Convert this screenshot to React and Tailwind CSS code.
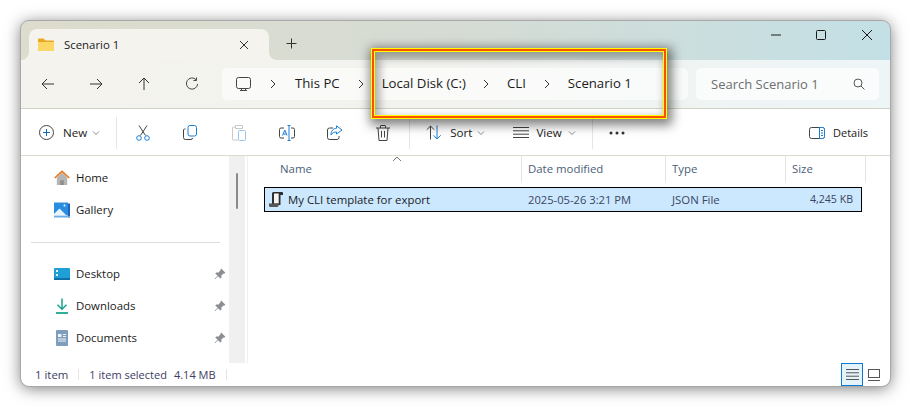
import React from 'react';

const Chev = ({ x = 'w-2 h-2' }) => (
  <svg className={x} viewBox="0 0 8 8" fill="none" stroke="#8a8a8a" strokeWidth="1"><path d="M1 2.5 4 5.5 7 2.5" /></svg>
);

const Crumb = () => (
  <svg className="w-2 h-[10px]" viewBox="0 0 8 10" fill="none" stroke="#333" strokeWidth="1"><path d="M2 1 6 5 2 9" /></svg>
);

const Divider = () => <div className="w-px h-[32px] bg-[#e5e5e5]" />;

const Pin = () => (
  <svg className="w-3 h-3 ml-auto mr-[3px]" viewBox="0 0 12 12" fill="#8b8f94">
    <path d="M7.2.6 11.4 4.8 10.5 5.6 9.6 5.4 7.4 7.6 7.4 9.8 6.4 10.6 4 8.2 1 11.2.6 10.8 3.6 7.8 1.3 5.5 2.2 4.5 4.4 4.5 6.6 2.3 6.4 1.4Z" />
  </svg>
);

const NavItem = ({ icon, label, pinned }) => (
  <div className="h-8 flex items-center pl-[33px] text-[#1a1a1a]">
    <div className="w-4 h-4 mr-[6px] shrink-0 flex items-center justify-center">{icon}</div>
    <span>{label}</span>
    {pinned && <Pin />}
  </div>
);

const HomeIcon = (
  <svg width="17" height="16" viewBox="0 0 17 16">
    <path d="M3 7.5 8.5 2.5 14 7.5V15.5H3Z" fill="#b5b5b5" />
    <path d="M6.5 15.5V10.5H10.5V15.5Z" fill="#8f8f8f" />
    <path d="M.8 8 8.5 1 16.2 8" fill="none" stroke="#e8761c" strokeWidth="1.7" />
  </svg>
);

const GalleryIcon = (
  <svg width="16" height="16" viewBox="0 0 16 16">
    <rect x="0" y="0.5" width="14" height="13" fill="#2a8ee0" />
    <rect x="14" y="1.5" width="2" height="14" fill="#1b66b8" />
    <rect x="0" y="14" width="16" height="1.5" fill="#6aaee8" />
    <path d="M0 12 5.5 6.5 11 12 12.5 13.5H0Z" fill="#e8f3fc" />
    <circle cx="10.5" cy="3.5" r="1" fill="#fff" />
  </svg>
);

const DesktopIcon = (
  <svg width="16" height="12" viewBox="0 0 16 12">
    <rect width="16" height="12" rx="1" fill="#1e9fd6" />
    <rect y="10" width="16" height="2" fill="#0f6fa8" />
    <rect x="2" y="2" width="2" height="2" fill="#dff4fb" />
    <rect x="2" y="6" width="2" height="2" fill="#dff4fb" />
  </svg>
);

const DownloadIcon = (
  <svg width="14" height="16" viewBox="0 0 14 16" fill="none" stroke="#19a58c" strokeWidth="1.5">
    <path d="M7 0.5V11M2.5 6.8 7 11.2 11.5 6.8" />
    <path d="M1 15H13" strokeWidth="1.8" />
  </svg>
);

const DocsIcon = (
  <svg width="12" height="16" viewBox="0 0 12 16">
    <rect width="12" height="16" rx="1" fill="#7f9dbd" />
    <rect x="2" y="4" width="3.5" height="3" fill="#eef3f8" />
    <path d="M7 4.5h3M7 6.5h3M2 9h8M2 11h8" stroke="#eef3f8" strokeWidth="1" />
  </svg>
);

const Column = ({ label, className }) => (
  <div className={`h-[26px] flex items-center border-r border-[#e5e5e5] text-[#4c607a] ${className}`}>{label}</div>
);

export default function App() {
  return (
    <div className="relative w-[911px] h-[407px] bg-white p-[21px] overflow-hidden text-[11.4px] leading-none" style={{ fontFamily: '"Open Sans", "Noto Sans", sans-serif' }}>
      <div className="w-[869px] h-[365px] flex flex-col rounded-lg overflow-hidden bg-white shadow-[0_2px_16px_rgba(0,0,0,0.55)] outline outline-[#a8a8a8]">
        {/* Title bar */}
        <div className="h-[39px] shrink-0 flex items-end pl-2 bg-linear-to-r from-[#dddccd] via-[#d6dcd4] to-[#c3e0e6]">
          <div className="relative w-[240px] h-[31px] rounded-t-lg bg-[#f4f3ee] flex items-center pl-[9px] pr-[20px]">
            {/* flared tab corners */}
            <div className="absolute -left-2 bottom-0 w-2 h-2 bg-[#f4f3ee]"><div className="w-2 h-2 rounded-br-lg bg-[#dddccd]" /></div>
            <div className="absolute -right-2 bottom-0 w-2 h-2 bg-[#f4f3ee]"><div className="w-2 h-2 rounded-bl-lg bg-[#dbdccf]" /></div>
            <svg width="16" height="13" viewBox="0 0 16 13">
              <path d="M0 1.5A1 1 0 0 1 1 .5H5.5L7.5 2.5H15A1 1 0 0 1 16 3.5V12A1 1 0 0 1 15 13H1A1 1 0 0 1 0 12Z" fill="#e9a820" />
              <path d="M0 4H16V12A1 1 0 0 1 15 13H1A1 1 0 0 1 0 12Z" fill="#fcd766" />
            </svg>
            <span className="ml-[10px] text-[#1a1a1a]">Scenario 1</span>
            <svg className="ml-auto" width="10" height="10" viewBox="0 0 10 10" stroke="#333" strokeWidth="1"><path d="M1 1 9 9M9 1 1 9" /></svg>
          </div>
          <div className="ml-[17px] mb-[11px]">
            <svg width="11" height="11" viewBox="0 0 11 11" stroke="#333" strokeWidth="1"><path d="M5.5 0.5V10.5M0.5 5.5H10.5" /></svg>
          </div>
          <div className="ml-auto self-start h-[28px] flex items-center">
            <svg width="10" height="10" viewBox="0 0 10 10" stroke="#1a1a1a" strokeWidth="1"><path d="M0 5H10" /></svg>
            <svg className="ml-[35px]" width="10" height="10" viewBox="0 0 10 10" fill="none" stroke="#1a1a1a" strokeWidth="1"><rect x="0.5" y="0.5" width="9" height="9" rx="1" /></svg>
            <svg className="ml-[36px] mr-[18px]" width="10" height="10" viewBox="0 0 10 10" stroke="#1a1a1a" strokeWidth="1"><path d="M0 0 10 10M10 0 0 10" /></svg>
          </div>
        </div>

        {/* Address row */}
        <div className="h-[49px] shrink-0 flex items-center pl-[20px] pr-[11px] border-b border-[#cfd3c6] bg-linear-to-r from-[#f4f3ee] via-[#f2f3ef] to-[#edf5f7]">
          <svg width="14" height="12" viewBox="0 0 14 12" fill="none" stroke="#333" strokeWidth="1"><path d="M13 6H1M6 1 1 6 6 11" /></svg>
          <svg className="ml-[34px]" width="14" height="12" viewBox="0 0 14 12" fill="none" stroke="#333" strokeWidth="1"><path d="M1 6H13M8 1 13 6 8 11" /></svg>
          <svg className="ml-[35px]" width="12" height="14" viewBox="0 0 12 14" fill="none" stroke="#333" strokeWidth="1"><path d="M6 13V1M1 6 6 1 11 6" /></svg>
          <svg className="ml-[35px]" width="14" height="14" viewBox="0 0 14 14" fill="none" stroke="#444" strokeWidth="1"><path d="M11 2.6A5.6 5.6 0 1 0 12.6 7" /><path d="M11.5 .5V3.5H8.5" /></svg>
          <div className="ml-[23px] w-[466px] h-8 rounded-[5px] bg-white/60 flex items-center pl-[14px] text-[13.2px] text-[#1a1a1a]">
            <svg width="15" height="15" viewBox="0 0 15 15" fill="none" stroke="#444" strokeWidth="1"><rect x="0.5" y="0.5" width="14" height="11" rx="2" /><path d="M4 13.5H11M5.5 12V13.5M9.5 12V13.5" /></svg>
            <span className="ml-[18px]"><Crumb /></span>
            <span className="ml-[18px]">This PC</span>
            <span className="ml-[17px]"><Crumb /></span>
            <span className="ml-[17px]">Local Disk (C:)</span>
            <span className="ml-[16px]"><Crumb /></span>
            <span className="ml-[17px]">CLI</span>
            <span className="ml-[17px]"><Crumb /></span>
            <span className="ml-[17px]">Scenario 1</span>
          </div>
          <div className="ml-2 flex-1 h-8 rounded-[5px] bg-white/70 flex items-center pl-[15px] pr-[14px] text-[13px] text-[#6e6e6e]">
            <span>Search Scenario 1</span>
            <svg className="ml-auto" width="12" height="12" viewBox="0 0 12 12" fill="none" stroke="#555" strokeWidth="1"><circle cx="5" cy="5" r="4" /><path d="M8 8 11.5 11.5" /></svg>
          </div>
        </div>

        {/* Toolbar */}
        <div className="h-[47px] shrink-0 flex items-center pl-[18px] pr-[22px] pt-[1px] bg-white border-b border-[#dcdcd2] text-[#1a1a1a] text-[11.6px]">
          <svg width="15" height="15" viewBox="0 0 15 15" fill="none"><circle cx="7.5" cy="7.5" r="7" stroke="#444" /><path d="M7.5 4V11M4 7.5H11" stroke="#0f6cbd" /></svg>
          <span className="ml-[9px]">New</span>
          <span className="ml-[5px] flex"><Chev /></span>
          <div className="ml-4"><Divider /></div>
          <svg className="ml-[19px]" width="14" height="16" viewBox="0 0 14 16" fill="none" stroke="#444"><path d="M3 .5 9.5 10.5M11 .5 4.5 10.5" /><circle cx="3" cy="13" r="2.3" stroke="#1c7ed6" /><circle cx="11" cy="13" r="2.3" stroke="#1c7ed6" /></svg>
          <svg className="ml-[33px]" width="14" height="15" viewBox="0 0 14 15" fill="none"><path d="M2.5 4H1.5A1 1 0 0 0 .5 5V12.5A2 2 0 0 0 2.5 14.5H8A1.5 1.5 0 0 0 9.5 13" stroke="#444" /><rect x="5" y=".5" width="8.5" height="10.5" rx="2" stroke="#1c7ed6" /></svg>
          <svg className="ml-[35px]" width="14" height="16" viewBox="0 0 14 16" fill="none" opacity="0.45"><path d="M3.5 2H1.5A1 1 0 0 0 .5 3V14A1 1 0 0 0 1.5 15H6" stroke="#888" /><path d="M3.5 .5H10.5V3.5H3.5Z" stroke="#888" /><rect x="6.5" y="5.5" width="7" height="10" rx="1" stroke="#1c7ed6" /></svg>
          <svg className="ml-[33px]" width="16" height="16" viewBox="0 0 16 16" fill="none"><path d="M5 3H2A1.5 1.5 0 0 0 .5 4.5V11.5A1.5 1.5 0 0 0 2 13H5M12 3H14A1.5 1.5 0 0 1 15.5 4.5V11.5A1.5 1.5 0 0 1 14 13H12" stroke="#444" /><path d="M3.5 10.5 5.8 5 8 10.5M4.3 9H7.3" stroke="#1c7ed6" /><path d="M10 .5V15.5M8.5 .5H11.5M8.5 15.5H11.5" stroke="#1c7ed6" /></svg>
          <svg className="ml-[32px]" width="16" height="15" viewBox="0 0 16 15" fill="none"><path d="M6 3H2.5A2 2 0 0 0 .5 5V12.5A2 2 0 0 0 2.5 14.5H10A2 2 0 0 0 12 12.5V11" stroke="#444" /><path d="M9.5 .8 15 5 9.5 9V7C7 7 5 8 4 10 4 6 6 3.5 9.5 3.3Z" stroke="#1c7ed6" /></svg>
          <svg className="ml-[33px]" width="14" height="16" viewBox="0 0 14 16" fill="none" stroke="#444"><path d="M0 3H14M4.5 3V1A.5.5 0 0 1 5 .5H9A.5.5 0 0 1 9.5 1V3M2 3 3 15.5H11L12 3M5.5 6V12.5M8.5 6V12.5" /></svg>
          <div className="ml-[19px]"><Divider /></div>
          <svg className="ml-[16px]" width="16" height="15" viewBox="0 0 16 15" fill="none"><path d="M4.5 14.5V1M.8 4.7 4.5 1 8.2 4.7" stroke="#444" /><path d="M11 .5V14M7.5 10.3 11 14 14.7 10.3" stroke="#1c7ed6" /></svg>
          <span className="ml-[8px]">Sort</span>
          <span className="ml-[5px] flex"><Chev /></span>
          <div className="ml-[28px] flex">
            <svg width="16" height="11" viewBox="0 0 16 11" stroke="#444"><path d="M0 .5H16M0 3.8H16M0 7.2H16M0 10.5H16" /></svg>
          </div>
          <span className="ml-[7px]">View</span>
          <span className="ml-[6px] flex"><Chev /></span>
          <div className="ml-4"><Divider /></div>
          <svg className="ml-4" width="16" height="4" viewBox="0 0 16 4" fill="#333"><circle cx="2" cy="2" r="1.5" /><circle cx="8" cy="2" r="1.5" /><circle cx="14" cy="2" r="1.5" /></svg>
          <svg className="ml-auto" width="16" height="12" viewBox="0 0 16 12" fill="none"><rect x=".5" y=".5" width="15" height="11" rx="2" stroke="#444" /><path d="M10.5 .5H13.5A2 2 0 0 1 15.5 2.5V9.5A2 2 0 0 1 13.5 11.5H10.5Z" fill="#fff" stroke="#1c7ed6" /><path d="M12 3.5H14M12 6H14M12 8.5H14" stroke="#1c7ed6" /></svg>
          <span className="ml-2 text-[11px]">Details</span>
        </div>

        {/* Main */}
        <div className="flex-1 min-h-0 flex bg-white">
          <div className="w-[208px] shrink-0 pt-[6px] overflow-hidden">
            <NavItem icon={HomeIcon} label="Home" />
            <NavItem icon={GalleryIcon} label="Gallery" />
            <div className="mt-4 ml-[10px] mr-[9px] h-px bg-[#dcdcdc]" />
            <div className="mt-[15px]">
              <NavItem icon={DesktopIcon} label="Desktop" pinned />
              <NavItem icon={DownloadIcon} label="Downloads" pinned />
              <NavItem icon={DocsIcon} label="Documents" pinned />
            </div>
          </div>
          <div className="w-4 shrink-0 bg-[#f0f0f0] pt-[17px] flex justify-center">
            <div className="w-[2px] h-9 bg-[#8a8a8a] rounded-full" />
          </div>
          <div className="w-[3px] shrink-0 border-r border-[#efefef]" />
          <div className="flex-1 min-w-0 relative">
            <div className="flex pl-[32px]">
              <Column label="Name" className="w-[242px]" />
              <Column label="Date modified" className="w-[144px] pl-[6px]" />
              <Column label="Type" className="w-[120px] pl-[6px]" />
              <Column label="Size" className="w-[80px] pl-[6px]" />
            </div>
            <svg className="absolute left-[144px] top-0" width="10" height="6" viewBox="0 0 10 6" fill="none" stroke="#777"><path d="M1 5 5 1 9 5" /></svg>
            <div className="mt-[5px] ml-[16px] w-[598px] h-[25px] bg-[#cce8ff] border border-black flex items-center">
              <svg className="ml-[4px]" width="14" height="15" viewBox="0 0 14 15">
                <path d="M3 1.5A1.5 1.5 0 0 1 4.5 0H13A1 1 0 0 1 14 1V3H11.5V13H3Z" fill="#2e2e2e" />
                <path d="M5 1.5H9.7V11.5H5Z" fill="#f4f4f4" />
                <path d="M0 11.5H9.5V13.5A1.5 1.5 0 0 1 8 15H1.5A1.5 1.5 0 0 1 0 13.5Z" fill="#555" />
              </svg>
              <span className="ml-[5px] w-[240px] text-[#1a1a1a]">My CLI template for export</span>
              <span className="w-[144px] text-[11.2px] text-[#3a4660]">2025-05-26 3:21 PM</span>
              <span className="w-[96px] text-[#3a4660]">JSON File</span>
              <span className="w-[85px] text-right text-[10.6px] text-[#3a4660]">4,245 KB</span>
            </div>
          </div>
        </div>

        {/* Status bar */}
        <div className="h-[23px] shrink-0 flex items-center pl-[14px] pr-[10px] bg-white text-[#3d3d66]">
          <span>1 item</span>
          <div className="ml-[10px] w-px h-[11px] bg-[#e5e5e5]" />
          <span className="ml-[10px] text-[11px]">1 item selected</span>
          <span className="ml-[7px] text-[11px]">4.14 MB</span>
          <div className="ml-[10px] w-px h-[11px] bg-[#e5e5e5]" />
          <div className="ml-auto w-[22px] h-[23px] bg-[#e5f3fb] border border-[#0f7bd0] flex items-center justify-center">
            <svg width="13" height="11" viewBox="0 0 13 11" stroke="#555"><path d="M0 .5H13M0 3.8H13M0 7.2H13M0 10.5H13" /></svg>
          </div>
          <svg className="ml-[5px]" width="12" height="12" viewBox="0 0 12 12" fill="none" stroke="#555"><rect x=".5" y=".5" width="11" height="8" /><path d="M0 11.5H12" /></svg>
        </div>
      </div>

      {/* Highlight callout over the breadcrumb */}
      <div className="absolute left-[371px] top-[48px] w-[296px] h-[71px] border border-[#ffff00] shadow-[2px_3px_10px_3px_rgba(0,0,0,0.5)]">
        <div className="w-full h-full border-2 border-[#ff5000]">
          <div className="w-full h-full border border-[#ffff00] shadow-[inset_3px_4px_8px_2px_rgba(0,0,0,0.3)]" />
        </div>
      </div>
    </div>
  );
}
